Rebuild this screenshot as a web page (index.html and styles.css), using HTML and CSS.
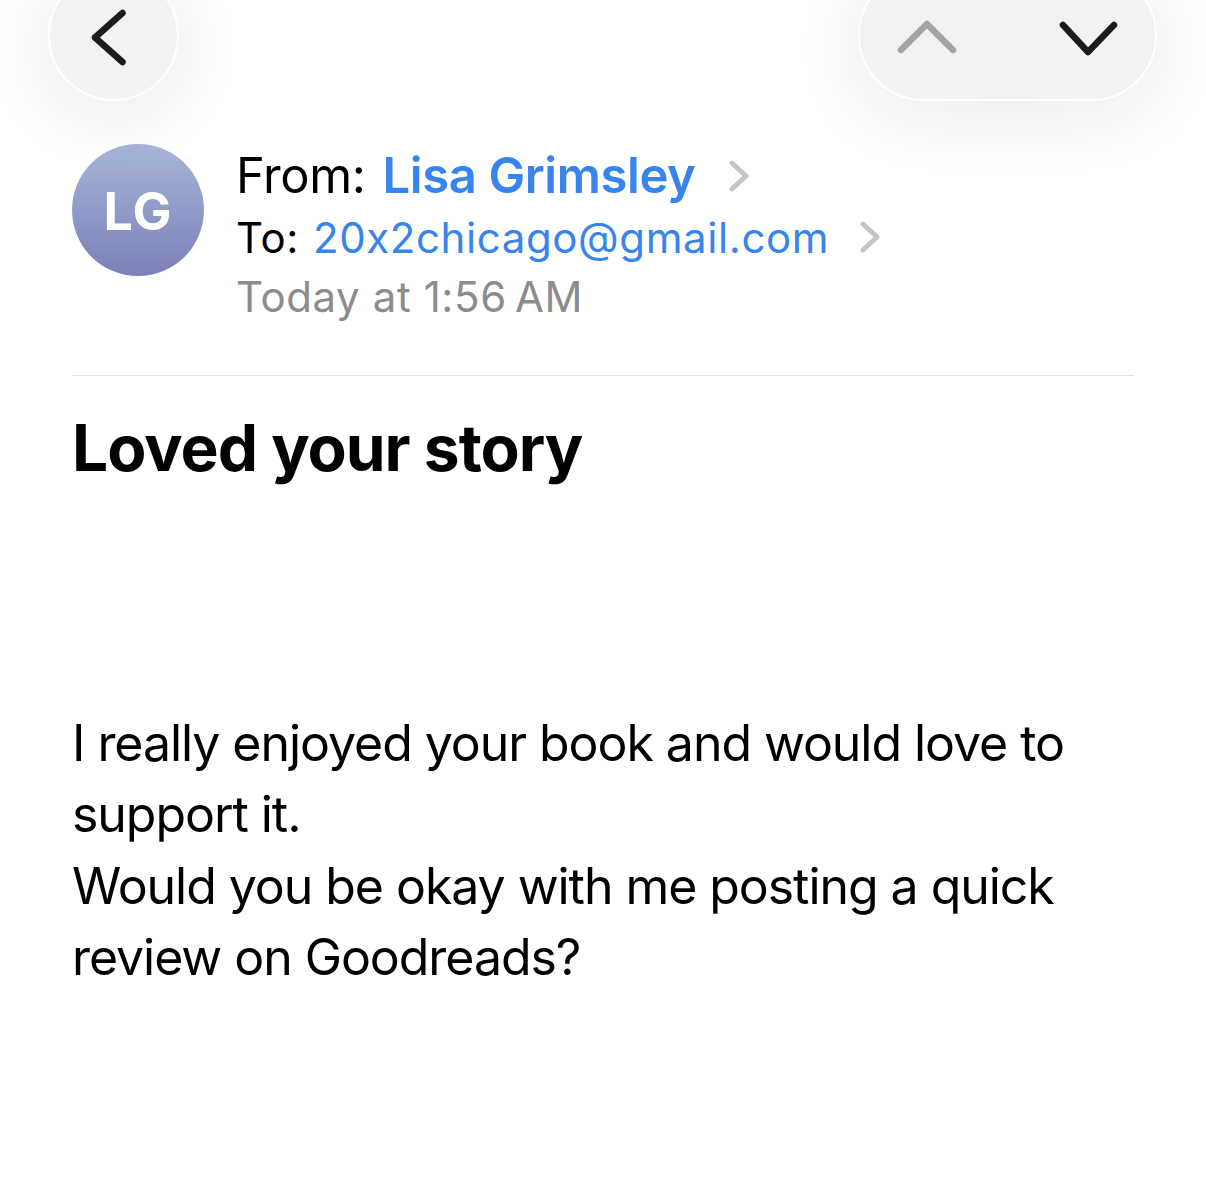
FILE: index.html
```html
<!DOCTYPE html>
<html lang="en">
<head>
<meta charset="utf-8">
<title>Loved your story</title>
<link rel="stylesheet" href="styles.css">
</head>
<body>
<div class="screen">
  <div class="toolbar">
    <button class="circle-btn" aria-label="Back">
      <svg class="btn-icon" width="131" height="131" viewBox="0 0 131 131">
        <polyline class="dark" points="74.5,43 47,67.5 74.5,92" />
      </svg>
    </button>
    <div class="pill">
      <svg class="btn-icon" width="299" height="131" viewBox="0 0 299 131">
        <polyline class="light" points="43,80 69,54 95,80" />
        <polyline class="dark" points="205,55 230,82 256,55" />
      </svg>
    </div>
  </div>

  <div class="mail">
    <div class="header">
      <div class="avatar">LG</div>
      <div class="meta">
        <div class="line line-from"><span class="label">From:</span><span class="from">Lisa Grimsley</span><span class="chev">
          <svg width="20" height="32" viewBox="0 0 20 32"><polyline points="3,3 17,16 3,29"/></svg></span></div>
        <div class="line line-to"><span class="label">To:</span><span class="to">20x2chicago@gmail.com</span><span class="chev">
          <svg width="20" height="32" viewBox="0 0 20 32"><polyline points="3,3 17,16 3,29"/></svg></span></div>
        <div class="line date">Today at 1:56&#8201;AM</div>
      </div>
    </div>

    <h1 class="subject">Loved your story</h1>

    <div class="body">
      <p>I really enjoyed your book and would love to<br>support it.<br>Would you be okay with me posting a quick<br>review on Goodreads?</p>
    </div>
  </div>
</div>
</body>
</html>
```

FILE: styles.css
```css
* { box-sizing: border-box; }

html, body {
  margin: 0;
  padding: 0;
  background: #ffffff;
}

body {
  font-family: Inter, "Noto Sans", "Liberation Sans", sans-serif;
  color: #000;
  width: 1206px;
  height: 1202px;
  overflow: hidden;
}

.screen {
  width: 1206px;
}

.toolbar {
  display: flex;
  justify-content: space-between;
  align-items: flex-end;
  padding: 0 49px 0 48px;
  margin-top: -30px;
  height: 131px;
}

.circle-btn {
  width: 131px;
  height: 131px;
  border-radius: 50%;
  background: #f2f2f2;
  border: 2px solid #ffffff;
  box-shadow: 0 12px 70px rgba(0, 0, 0, 0.09);
  padding: 0;
  position: relative;
}

.pill {
  width: 299px;
  height: 131px;
  border-radius: 66px;
  background: #f2f2f2;
  border: 2px solid #ffffff;
  box-shadow: 0 12px 70px rgba(0, 0, 0, 0.09);
  position: relative;
}

.btn-icon {
  position: absolute;
  left: -2px;
  top: -2px;
}

.btn-icon polyline {
  fill: none;
  stroke-width: 6.5;
  stroke-linecap: round;
  stroke-linejoin: round;
}

.btn-icon .light { stroke: #a3a3a3; }
.btn-icon .dark { stroke: #1b1b1b; }

.mail {
  margin: 0 72px;
}

.header {
  display: flex;
  gap: 32px;
  margin-top: 43px;
  padding-bottom: 48px;
  border-bottom: 1px solid #e3e3e3;
}

.avatar {
  width: 132px;
  height: 132px;
  flex: none;
  border-radius: 50%;
  background: linear-gradient(180deg, #a7b5d8 0%, #7b80b9 100%);
  color: #fff;
  font-weight: 700;
  font-size: 52px;
  letter-spacing: 1px;
  display: flex;
  align-items: center;
  justify-content: center;
  padding-top: 2px;
}

.meta {
  margin-top: 2px;
}

.line {
  display: flex;
  align-items: center;
  white-space: nowrap;
  height: 59.5px;
  line-height: 59.5px;
}

.line-from {
  font-size: 49px;
  letter-spacing: -0.4px;
}

.line-from .label { margin-right: 17px; }

.line-to {
  font-size: 42px;
  letter-spacing: 0.6px;
  margin-top: 2px;
}

.line-to .label { margin-right: 14px; }

.from {
  color: #3884ef;
  font-weight: 600;
}

.to { color: #3884ef; }

.chev {
  display: inline-flex;
  margin-left: 33px;
}

.line-to .chev { margin-left: 31px; }

.chev svg polyline {
  fill: none;
  stroke: #c4c4c6;
  stroke-width: 4.8;
  stroke-linecap: round;
  stroke-linejoin: round;
}

.date {
  color: #8c8c8c;
  font-size: 42px;
  letter-spacing: 0.6px;
}

.subject {
  margin: 33px 0 0;
  font-size: 64px;
  line-height: 78px;
  font-weight: 700;
  letter-spacing: -1px;
}

.body {
  margin-top: 221px;
}

.body p {
  margin: 0;
  font-size: 50px;
  line-height: 71.5px;
  letter-spacing: -1.05px;
}
```
